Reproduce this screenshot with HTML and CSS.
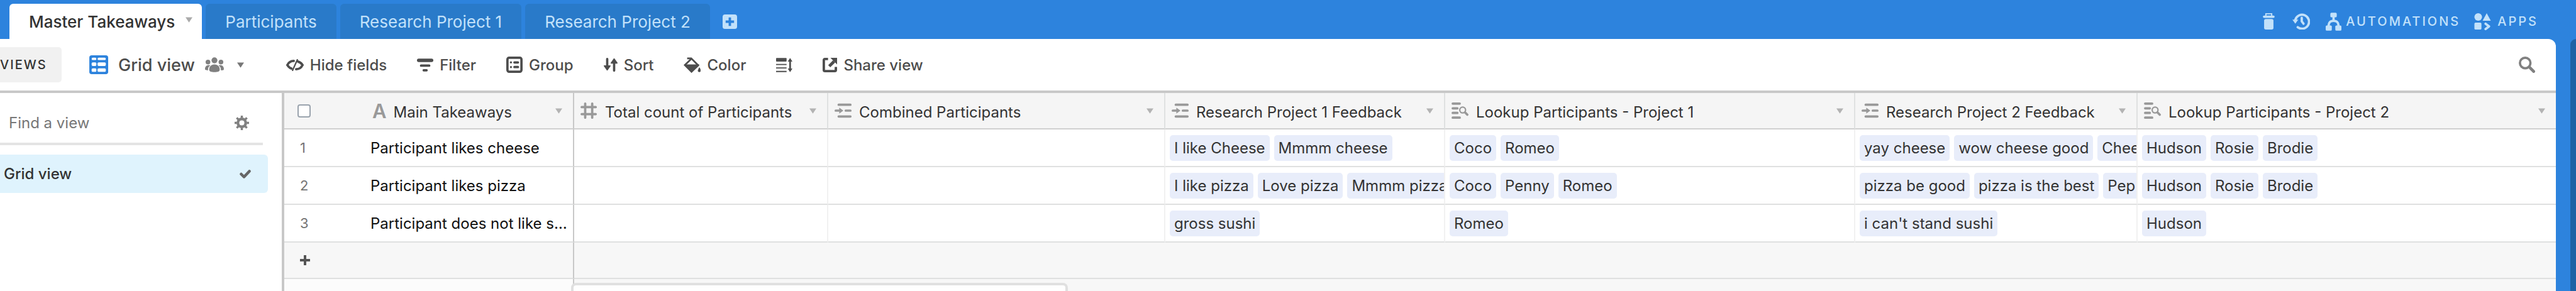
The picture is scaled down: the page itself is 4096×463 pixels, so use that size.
FILE: index.html
```
<!DOCTYPE html>
<html lang="en">
<head>
<meta charset="UTF-8">
<meta name="viewport" content="width=device-width, initial-scale=1.0">
<title>Master Takeaways</title>
<link rel="stylesheet" href="styles.css">
</head>
<body>

<!-- Shared icons -->
<svg class="sprite" aria-hidden="true">
  <symbol id="caret" viewBox="0 0 12 9"><path d="M0 0h12L6 9z" fill="currentColor"/></symbol>
  <symbol id="link" viewBox="0 0 30 24">
    <path d="M7 2h20M7 22h20M19 12h8M2 12h8" fill="none" stroke="currentColor" stroke-width="4" stroke-linecap="round"/>
    <path d="M8 7l7 5-7 5z" fill="currentColor"/>
  </symbol>
  <symbol id="lookup" viewBox="0 0 30 28">
    <path d="M2 2h12M2 10h8M2 18h8M2 26h12" fill="none" stroke="currentColor" stroke-width="4" stroke-linecap="round"/>
    <circle cx="19" cy="13" r="7" fill="#f5f5f5"/>
    <circle cx="19" cy="13" r="5" fill="none" stroke="currentColor" stroke-width="2.4"/>
    <path d="M23 17l4 4" stroke="currentColor" stroke-width="4" stroke-linecap="round"/>
  </symbol>
</svg>

<header class="topbar">
  <nav class="tabs">
    <button class="tab active">Master Takeaways <svg class="caret"><use href="#caret"/></svg></button>
    <button class="tab">Participants</button>
    <button class="tab">Research Project 1</button>
    <button class="tab">Research Project 2</button>
    <button class="addTab" aria-label="Add table">
      <svg width="23" height="23" viewBox="0 0 24 24"><rect width="24" height="24" rx="4" fill="currentColor"/><path d="M12 5v14M5 12h14" stroke="#2d83dd" stroke-width="4"/></svg>
    </button>
  </nav>
  <div class="topActions">
    <button class="iconBtn" aria-label="Trash">
      <svg width="19" height="26" viewBox="0 0 20 28"><path d="M5 5V1h10v4" fill="none" stroke="currentColor" stroke-width="2"/><rect y="4" width="20" height="4" rx="2" fill="currentColor"/><rect x="2" y="10" width="16" height="18" rx="3" fill="currentColor"/></svg>
    </button>
    <button class="iconBtn" aria-label="History">
      <svg width="28" height="26" viewBox="0 0 30 28"><g fill="none" stroke="currentColor" stroke-linecap="round" stroke-linejoin="round"><path d="M5 11A12 12 0 1 1 9 24" stroke-width="4"/><path d="M16 8v6l3 4" stroke-width="4"/></g><path d="M0 11h10l-5 7z" fill="currentColor"/></svg>
    </button>
    <button class="automations">
      <svg width="25" height="29" viewBox="0 0 27 31"><path d="M13.500 6v7M5 24c0-7 2-10 8.500-10S22 17 22 24" fill="none" stroke="currentColor" stroke-width="4"/><rect x="8" width="11" height="8" rx="2" fill="currentColor"/><rect y="22" width="10.500" height="9" rx="2" fill="currentColor"/><rect x="16.500" y="22" width="10.500" height="9" rx="2" fill="currentColor"/></svg>
      AUTOMATIONS
    </button>
    <button class="apps">
      <svg width="27" height="27" viewBox="0 0 28 29"><circle cx="6.500" cy="6.500" r="6.500" fill="currentColor"/><path d="M21 0l7 13H14z" fill="currentColor"/><rect y="16" width="12" height="12" rx="2" fill="currentColor"/><path d="M19 18l6 4.500-6 4.500" fill="none" stroke="currentColor" stroke-width="4" stroke-linecap="round" stroke-linejoin="round"/></svg>
      APPS
    </button>
  </div>
</header>

<div class="workspace">
  <main class="panel">

    <div class="toolbar">
      <button class="viewsBtn">VIEWS</button>
      <button class="viewName">
        <svg width="30" height="30" viewBox="0 0 32 32"><rect width="32" height="32" rx="4" fill="#2d83dd"/><g fill="#fff"><rect x="4" y="4" width="8" height="4" rx="2"/><rect x="14" y="4" width="14" height="4" rx="2"/><rect x="4" y="12" width="8" height="6" rx="2"/><rect x="14" y="12" width="14" height="6" rx="2"/><rect x="4" y="22" width="8" height="6" rx="2"/><rect x="14" y="22" width="14" height="6" rx="2"/></g></svg>
        <span>Grid view</span>
        <svg class="people" width="30" height="24" viewBox="0 0 32 25"><g fill="currentColor"><circle cx="16" cy="5" r="5"/><circle cx="5" cy="8" r="4"/><circle cx="27" cy="8" r="4"/><path d="M16 12c6 0 9 4 9 9 0 3-4 4-9 4s-9-1-9-4c0-5 3-9 9-9z"/><path d="M7 13c-5 0-7 3-7 7 0 2 2 2 5 2 0-4 1-7 4-8zM25 13c5 0 7 3 7 7 0 2-2 2-5 2 0-4-1-7-4-8z"/></g></svg>
        <svg class="caret"><use href="#caret"/></svg>
      </button>
      <div class="tools">
        <button>
          <svg width="28" height="19" viewBox="0 0 30 20"><g fill="none" stroke="currentColor" stroke-linecap="round"><path d="M13 3C8 3 4 6 2 10c2 3 4 5 7 6M20 4c4 1 6 3 8 6-2 4-6 7-11 7" stroke-width="4"/><path d="M19 1l-8 18" stroke-width="2.500"/></g></svg>
          Hide fields
        </button>
        <button>
          <svg width="26" height="21" viewBox="0 0 28 22"><g stroke="currentColor" stroke-linecap="round"><path d="M3 3h22" stroke-width="6"/><path d="M7 12h14M11.500 20h5" stroke-width="4"/></g></svg>
          Filter
        </button>
        <button>
          <svg width="26" height="26" viewBox="0 0 28 28"><rect x="2" y="2" width="24" height="24" rx="3" fill="none" stroke="currentColor" stroke-width="4"/><circle cx="8" cy="10" r="1.800" fill="currentColor"/><circle cx="8" cy="18" r="1.800" fill="currentColor"/><path d="M14 10h6M14 18h6" stroke="currentColor" stroke-width="4" stroke-linecap="round"/></svg>
          Group
        </button>
        <button>
          <svg width="22" height="22" viewBox="0 0 24 24"><path d="M6 2v14M18 8v14" stroke="currentColor" stroke-width="4" stroke-linecap="round"/><path d="M1 14h10l-5 7zM13 9h10l-5-7z" fill="currentColor" stroke="currentColor" stroke-width="2" stroke-linejoin="round"/></svg>
          Sort
        </button>
        <button>
          <svg width="27" height="25" viewBox="0 0 29 27"><path d="M6 2h7l12 12-11.500 11L2 13.500 13 3" fill="none" stroke="currentColor" stroke-width="3"/><path d="M1 12.500h26L13.500 26.500z" fill="currentColor"/><path d="M27 18c3 5 3 7 0 7s-3-2 0-7z" fill="currentColor" stroke="currentColor"/></svg>
          Color
        </button>
        <button aria-label="Row height">
          <svg width="26" height="23" viewBox="0 0 28 24"><rect width="18" height="6" rx="1" fill="currentColor"/><path d="M0 11h18M0 17h18M0 23h18" stroke="currentColor" stroke-width="2"/><path d="M24 4v16" stroke="currentColor" stroke-width="3"/><path d="M20 6l4-6 4 6zM20 18l4 6 4-6z" fill="currentColor"/></svg>
        </button>
        <button>
          <svg width="23" height="23" viewBox="0 0 24 24"><path d="M9 2H4a2 2 0 0 0-2 2v16a2 2 0 0 0 2 2h16a2 2 0 0 0 2-2v-5" fill="none" stroke="currentColor" stroke-width="4"/><path d="M11 14l8-8" stroke="currentColor" stroke-width="5"/><path d="M13 0h11v11z" fill="currentColor"/></svg>
          Share view
        </button>
      </div>
      <button class="searchBtn" aria-label="Search">
        <svg width="26" height="26" viewBox="0 0 28 28"><circle cx="11" cy="11" r="9" fill="none" stroke="currentColor" stroke-width="4"/><path d="M18 18l7.500 7.500" stroke="currentColor" stroke-width="5" stroke-linecap="round"/></svg>
      </button>
    </div>

    <div class="content">
      <aside class="sidebar">
        <div class="findView">
          <input type="text" placeholder="Find a view" aria-label="Find a view">
          <button aria-label="View settings">
            <svg width="23" height="23" viewBox="0 0 24 24"><circle cx="12" cy="12" r="6.500" fill="none" stroke="currentColor" stroke-width="4.500"/><path d="M12 0v4M12 20v4M0 12h4M20 12h4M3.500 3.500l3 3M17.500 17.500l3 3M3.500 20.500l3-3M17.500 6.500l3-3" stroke="currentColor" stroke-width="3.600"/></svg>
          </button>
        </div>
        <a class="viewItem" href="#grid">
          Grid view
          <svg width="18" height="14" viewBox="0 0 18 14"><path d="M2.500 7l4.500 4.500L15.500 2.500" fill="none" stroke="currentColor" stroke-width="4.500" stroke-linejoin="round" stroke-linecap="round"/></svg>
        </a>
      </aside>

      <div class="grid" id="grid">
        <table>
          <colgroup>
            <col class="colNumber">
            <col class="colMain">
            <col class="colCount">
            <col class="colCombined">
            <col class="colFeedback">
            <col class="colLookup">
            <col class="colFeedback2">
            <col>
          </colgroup>
          <thead>
            <tr>
              <th class="number"><input type="checkbox" aria-label="Select all rows"></th>
              <th class="main"><div class="head"><span class="typeText" aria-hidden="true">A</span><span class="name">Main Takeaways</span><svg class="caret"><use href="#caret"/></svg></div></th>
              <th><div class="head"><svg class="type" viewBox="0 0 30 28"><path d="M8 2v24M20 2v24M2 8h24M2 20h24" stroke="currentColor" stroke-width="4" stroke-linecap="round"/></svg><span class="name">Total count of Participants</span><svg class="caret"><use href="#caret"/></svg></div></th>
              <th><div class="head"><svg class="type"><use href="#link"/></svg><span class="name">Combined Participants</span><svg class="caret"><use href="#caret"/></svg></div></th>
              <th><div class="head"><svg class="type"><use href="#link"/></svg><span class="name">Research Project 1 Feedback</span><svg class="caret"><use href="#caret"/></svg></div></th>
              <th><div class="head"><svg class="type"><use href="#lookup"/></svg><span class="name">Lookup Participants - Project 1</span><svg class="caret"><use href="#caret"/></svg></div></th>
              <th><div class="head"><svg class="type"><use href="#link"/></svg><span class="name">Research Project 2 Feedback</span><svg class="caret"><use href="#caret"/></svg></div></th>
              <th><div class="head"><svg class="type"><use href="#lookup"/></svg><span class="name">Lookup Participants - Project 2</span><svg class="caret"><use href="#caret"/></svg></div></th>
            </tr>
          </thead>
          <tbody>
            <tr>
              <td class="number">1</td>
              <td class="main">Participant likes cheese</td>
              <td></td>
              <td></td>
              <td><div class="chips"><span>I like Cheese</span><span>Mmmm cheese</span></div></td>
              <td><div class="chips"><span>Coco</span><span>Romeo</span></div></td>
              <td><div class="chips"><span>yay cheese</span><span>wow cheese good</span><span>Chee</span></div></td>
              <td><div class="chips"><span>Hudson</span><span>Rosie</span><span>Brodie</span></div></td>
            </tr>
            <tr>
              <td class="number">2</td>
              <td class="main">Participant likes pizza</td>
              <td></td>
              <td></td>
              <td><div class="chips"><span>I like pizza</span><span>Love pizza</span><span>Mmmm pizza</span></div></td>
              <td><div class="chips"><span>Coco</span><span>Penny</span><span>Romeo</span></div></td>
              <td><div class="chips"><span>pizza be good</span><span>pizza is the best</span><span>Pep</span></div></td>
              <td><div class="chips"><span>Hudson</span><span>Rosie</span><span>Brodie</span></div></td>
            </tr>
            <tr>
              <td class="number">3</td>
              <td class="main">Participant does not like sushi</td>
              <td></td>
              <td></td>
              <td><div class="chips"><span>gross sushi</span></div></td>
              <td><div class="chips"><span>Romeo</span></div></td>
              <td><div class="chips"><span>i can't stand sushi</span></div></td>
              <td><div class="chips"><span>Hudson</span></div></td>
            </tr>
          </tbody>
          <tfoot>
            <tr>
              <td class="number"><button aria-label="Add row"><svg width="16" height="16" viewBox="0 0 16 16"><path d="M8 0v16M0 8h16" stroke="currentColor" stroke-width="4"/></svg></button></td>
              <td class="main"></td>
              <td colspan="6"></td>
            </tr>
          </tfoot>
        </table>
        <div class="gridRest"><div class="frozen"></div></div>
        <div class="popup"></div>
      </div>
    </div>
  </main>
  <div class="drawer"></div>
</div>

</body>
</html>
```
FILE: styles.css
```
* {
  box-sizing: border-box;
}
body {
  margin: 0;
  height: 100vh;
  display: flex;
  flex-direction: column;
  overflow: hidden;
  background-color: #2d83dd;
  color: #333;
  font-family: Inter, "Liberation Sans", sans-serif;
  font-size: 24px;
}
button {
  display: flex;
  align-items: center;
  padding: 0;
  border: none;
  background: none;
  color: inherit;
  font: inherit;
  letter-spacing: inherit;
  white-space: nowrap;
  cursor: pointer;
}
svg {
  flex: none;
}
.sprite {
  position: absolute;
  width: 0;
  height: 0;
}
.caret {
  width: 11px;
  height: 9px;
}

/* Top bar */
.topbar {
  display: flex;
  justify-content: space-between;
  height: 62px;
  padding: 6px 60px 0 15px;
  color: #c2e1fa;
}
.tabs {
  display: flex;
  gap: 6px;
}
.tab {
  padding: 0 31px;
  border-radius: 6px 6px 0 0;
  background-color: #297ac9;
  font-size: 26px;
}
.tab.active {
  gap: 17px;
  padding-right: 15px;
  background-color: #fff;
  color: #333;
  font-weight: 500;
}
.tab .caret {
  margin-bottom: 6px;
  color: #aaa;
}
.addTab {
  margin-left: 14px;
}
.topActions {
  display: flex;
  align-items: center;
  gap: 22px;
  font-size: 20px;
  font-weight: 500;
  letter-spacing: 3px;
}
.iconBtn {
  padding: 0 3px;
}
.automations {
  gap: 7px;
}
.apps {
  gap: 10px;
}

/* Panel */
.workspace {
  flex: 1;
  display: flex;
  gap: 23px;
  min-height: 0;
}
.panel {
  flex: 1;
  display: flex;
  flex-direction: column;
  min-width: 0;
  overflow: hidden;
  border-radius: 0 12px 0 0;
  background-color: #fff;
}
.drawer {
  width: 9px;
  border-radius: 9px 0 0 0;
  background-color: #1f62a5;
}

/* Toolbar */
.toolbar {
  display: flex;
  align-items: center;
  height: 86px;
  padding-right: 33px;
  border-bottom: 4px solid #c8c8c8;
  color: #4d4d4d;
  font-weight: 500;
}
.viewsBtn {
  width: 98px;
  height: 56px;
  border-radius: 0 5px 5px 0;
  background-color: #f1f1f1;
  color: #333;
  font-size: 20px;
  letter-spacing: 2px;
}
.viewName {
  margin-left: 44px;
  font-size: 27px;
}
.viewName span {
  margin: 0 16px;
}
.viewName .people {
  color: #808080;
}
.viewName .caret {
  margin-left: 21px;
  color: #777;
}
.tools {
  display: flex;
  gap: 48px;
  margin-left: 67px;
}
.tools button {
  gap: 10px;
}
.searchBtn {
  margin-left: auto;
  color: #808080;
}

.content {
  flex: 1;
  display: flex;
  min-height: 0;
}

/* Sidebar */
.sidebar {
  width: 452px;
  padding: 12px 22px 0 0;
  border-right: 4px solid #c8c8c8;
}
.findView {
  display: flex;
  align-items: center;
  height: 71px;
  margin-right: 8px;
  padding: 4px 22px 0 14px;
  border-bottom: 4px solid #e4e4e4;
  color: #808080;
}
.findView input {
  flex: 1;
  min-width: 0;
  padding: 0;
  border: none;
  outline: none;
  background: none;
  font: inherit;
}
.findView input::placeholder {
  color: #777;
}
.viewItem {
  display: flex;
  align-items: center;
  justify-content: space-between;
  height: 61px;
  margin-top: 15px;
  padding: 0 27px 0 6px;
  border-radius: 0 6px 6px 0;
  background-color: #dff3fd;
  color: #333;
  font-weight: 500;
  text-decoration: none;
}
.viewItem svg {
  color: #666;
}

/* Grid */
.grid {
  flex: 1;
  position: relative;
  display: flex;
  flex-direction: column;
  min-width: 0;
  background-color: #f7f7f7;
}
table {
  width: 100%;
  table-layout: fixed;
  border-collapse: separate;
  border-spacing: 0;
}
.colNumber {
  width: 130px;
}
.colMain {
  width: 331px;
}
.colCount {
  width: 404px;
}
.colCombined {
  width: 536px;
}
.colFeedback {
  width: 445px;
}
.colLookup {
  width: 652px;
}
.colFeedback2 {
  width: 449px;
}
th,
td {
  padding: 0 0 0 7px;
  border-right: 2px solid #f1f1f1;
  border-bottom: 2px solid #dfe0e0;
  overflow: hidden;
  text-align: left;
  white-space: nowrap;
}
th {
  height: 58px;
  border-right-color: #dfe1e1;
  border-bottom-color: #d0d0d0;
  background-color: #f5f5f5;
  font-weight: 400;
}
td {
  height: 60px;
  background-color: #fff;
}
.number {
  padding-left: 21px;
  border-right: none;
  color: #757575;
  font-size: 22px;
}
td.number {
  padding-left: 25px;
}
th:last-child,
td:last-child {
  border-right: none;
}
.main {
  padding: 0 7px;
  border-right: 2px solid #c8c8c8;
  color: #111;
  text-overflow: ellipsis;
}
th.main {
  padding-right: 0;
  color: #333;
}
.number input {
  display: block;
  width: 21px;
  height: 21px;
  margin: 0;
  appearance: none;
  border: 2px solid #9aa3ad;
  border-radius: 4px;
  background-color: #fff;
}
.head {
  display: flex;
  align-items: center;
  padding: 0 17px 0 3px;
}
.head .type {
  width: 28px;
  height: 26px;
  color: #999;
}
.head .typeText {
  color: #999;
  font-size: 31px;
  font-weight: 600;
}
.head .name {
  flex: 1;
  padding: 4px 0 0 11px;
}
.head .caret {
  color: #b3b3b3;
}
.chips {
  display: flex;
  gap: 7px;
}
.chips span {
  flex: none;
  padding: 0 7px;
  border-radius: 5px;
  background-color: #e8edfa;
  line-height: 41px;
}
tfoot td {
  height: 58px;
  background-color: #f7f7f7;
}
tfoot button {
  color: #555;
}
.gridRest {
  flex: 1;
  display: flex;
}
.frozen {
  width: 461px;
  border-right: 2px solid #c8c8c8;
  background-color: #fcfcfc;
}

.popup {
  position: absolute;
  left: 456px;
  bottom: 0;
  width: 790px;
  height: 13px;
  border: 4px solid #e0e0e0;
  border-bottom: none;
  border-radius: 8px 8px 0 0;
  background-color: #fff;
}
```
